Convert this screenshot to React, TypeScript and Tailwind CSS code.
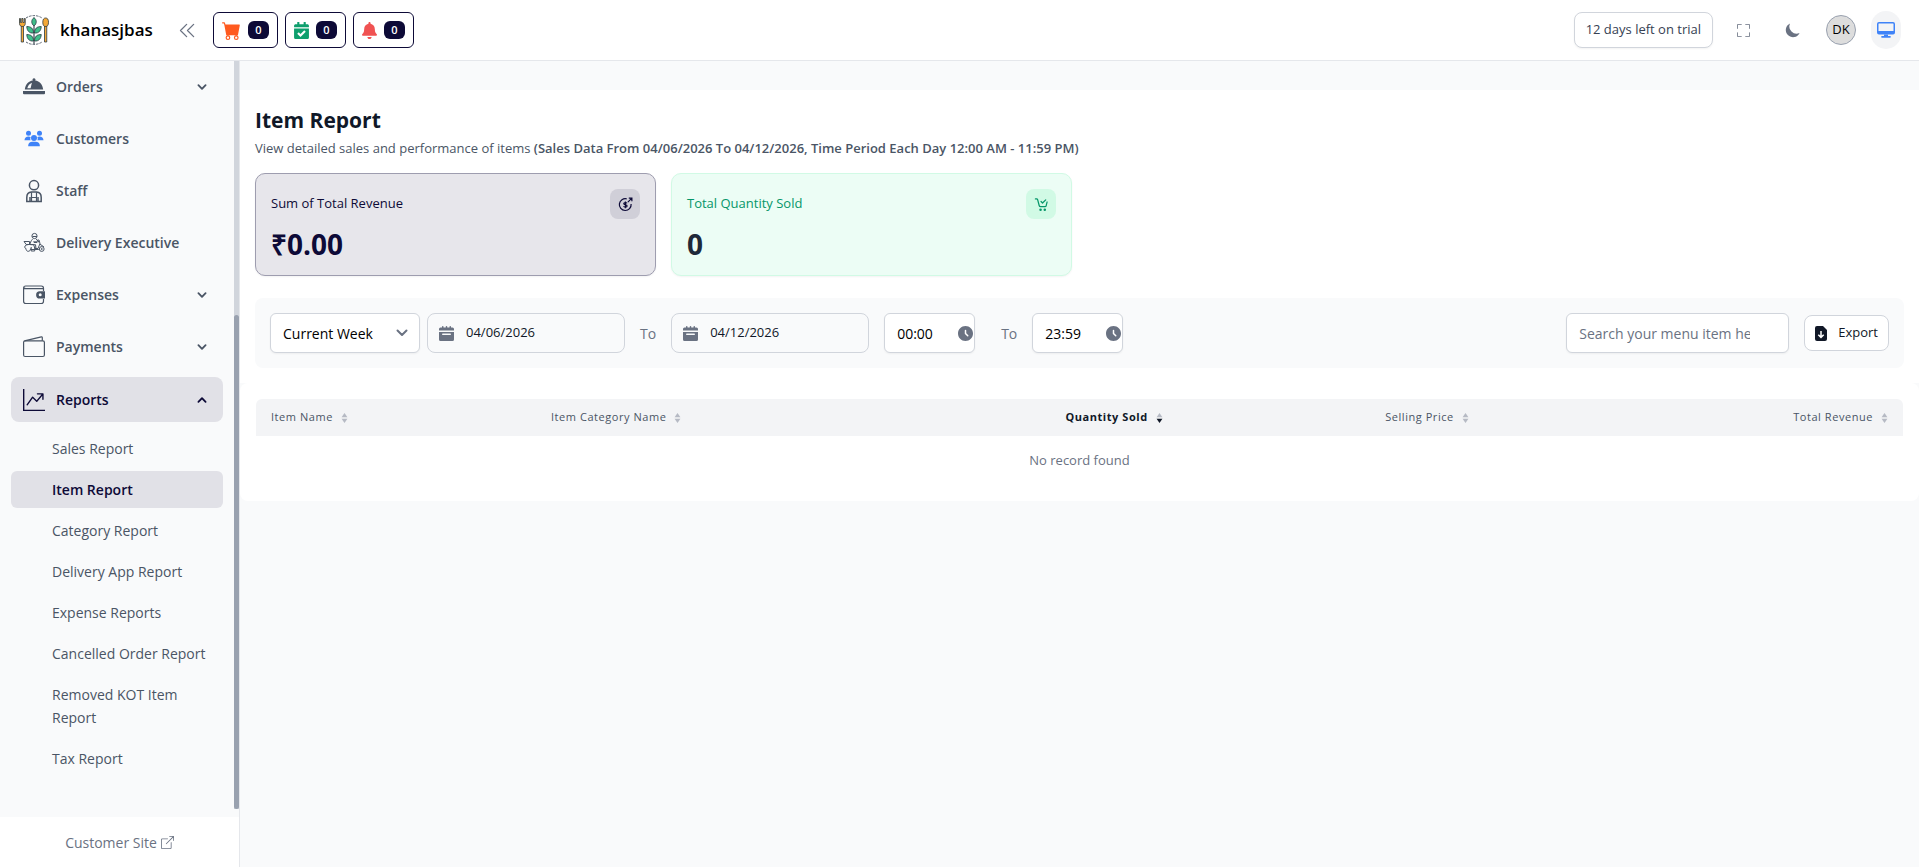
import { useState } from 'react';
import type { ReactNode } from 'react';
import { BsBoxArrowUpRight, BsCartFill, BsFullscreen, BsGraphUpArrow } from 'react-icons/bs';
import { FaBell, FaCalendarCheck } from 'react-icons/fa';
import { HiMoon, HiOutlineChevronDoubleLeft } from 'react-icons/hi';

function Logo() {
  return (
    <svg viewBox="0 0 60 60" className="size-[30px]" fill="none" aria-hidden="true">
      <path d="M14 6a29 29 0 0 1 32 0M14 54a29 29 0 0 0 32 0" stroke="#4b5563" strokeWidth="1.8" strokeDasharray="5 2" />
      <g stroke="#2b3a42" strokeWidth="1.6" strokeLinejoin="round">
        <path d="M4.500 22h4.500v32H4.500z" fill="#f4a836" />
        <path d="M1 7h2v8h2.500V7h2.500v8h2.500V7h2v10c0 4-2.500 6-5.700 6S1 21 1 17z" fill="#f4a836" />
        <path d="M51 22h4.500v32H51z" fill="#f4a836" />
        <ellipse cx="53.300" cy="14.500" rx="5.700" ry="8.500" fill="#f4a836" />
        <path d="M30 5c6 5 6 12 0 17-6-5-6-12 0-17z" fill="#3fbf8a" />
        <path d="M29 36c-8 1-13-4-13.500-13C24 23 29 27 29 36zM31 36c8 1 13-4 13.500-13C36 23 31 27 31 36z" fill="#3fbf8a" />
        <path d="M29 52c-8 1-13-4-13.500-13C24 39 29 43 29 52zM31 52c8 1 13-4 13.500-13C36 39 31 43 31 52z" fill="#3fbf8a" />
        <path d="M30 22v36" strokeWidth="2.2" />
      </g>
    </svg>
  );
}

function ClocheIcon() {
  return (
    <svg viewBox="0 0 22 22" className="size-[22px]" fill="currentColor" aria-hidden="true">
      <path d="M11 2.2a1.5 1.5 0 0 1 1.2 2.4c4.3.6 7.4 4 8 8.9H1.800C2.400 8.600 5.500 5.200 9.800 4.600A1.500 1.500 0 0 1 11 2.200zM4.300 12.200c.7-2.700 2.200-4.500 4.600-5.500l-1.300 5.500z" fillRule="evenodd" />
      <path d="M0 15h22v2.200a1 1 0 0 1-1 1H1a1 1 0 0 1-1-1z" />
    </svg>
  );
}

function CustomersIcon() {
  return (
    <svg viewBox="0 0 22 22" className="size-[22px]" fill="#3f83f8" aria-hidden="true">
      <circle cx="5.500" cy="5.300" r="2.500" />
      <circle cx="16.500" cy="5.300" r="2.500" />
      <path d="M1.500 12.300C1.500 10 3.200 8.600 5.400 8.600c1 0 1.700.2 2.300.6-.6 1-.6 2.100-.1 3.100zM20.500 12.300c0-2.300-1.700-3.700-3.900-3.700-1 0-1.700.2-2.300.6.6 1 .6 2.100.1 3.100z" />
      <circle cx="11" cy="10" r="3" />
      <path d="M5.200 18.200v-.6c0-2.400 1.800-3.900 4.100-3.900h3.400c2.300 0 4.100 1.500 4.100 3.900v.6z" />
    </svg>
  );
}

function StaffIcon() {
  return (
    <svg viewBox="0 0 22 24" className="h-[24px] w-[22px]" fill="none" stroke="currentColor" strokeWidth="1.500" aria-hidden="true">
      <circle cx="11" cy="6.200" r="4.600" />
      <path d="M3.800 22.400v-4c0-3 1.900-5 4.600-5.300h5.200c2.700.3 4.600 2.300 4.600 5.300v4zM7 22v-4M15 22v-4" />
      <path d="M8.500 13.200v9M13.500 13.200v9M8.500 18.500h5" strokeWidth="1.200" />
    </svg>
  );
}

function ScooterIcon() {
  return (
    <svg viewBox="0 0 22 22" className="size-[22px]" fill="none" stroke="currentColor" strokeWidth="1" strokeLinejoin="round" aria-hidden="true">
      <circle cx="11.500" cy="4" r="2.600" />
      <path d="M9.500 4.500h4.500M9.500 7.200c-1.700 1.800-2.600 4-2 5.500h5l.5 4M13 7.200l3 2.600h-4.500M11 9v1.500h3" />
      <path d="M1 9.500h5.500v3H3.200zM2 14c1-1.200 2.400-1.500 5-1.500h3.500l1.500 4h3l2-5-1-3.500h-1.500M3 16.500c-1 0-1.500-1-1-2.500M7.500 16.500c0 2-1 2.800-2.300 2.800S3 18.300 3 16.500M7.500 17.500h8.300" />
      <circle cx="18.700" cy="17" r="2.400" />
      <circle cx="18.700" cy="17" r=".6" />
      <path d="M8.200 15v4h3.500v-4M16.500 12l2.500 1.500 2 1.500" />
    </svg>
  );
}

function ExpensesIcon() {
  return (
    <svg viewBox="0 0 22 22" className="size-[22px]" fill="none" stroke="currentColor" aria-hidden="true">
      <path d="M20.500 7V4.200c0-1.500-1-2.200-2.200-2.200H2.700C1.500 2 .6 2.700.6 3.900v13.400c0 1.500.9 2.200 2.100 2.200h15.600c1.400 0 2.200-.8 2.200-2.200V15M.8 3.500c.3 1 1 1.200 2.200 1.200h17" strokeWidth="1.200" />
      <path d="M22 7.200h-5.200a3.600 3.600 0 0 0 0 7.400H22zM17.200 9.300a1.500 1.500 0 1 1 0 3 1.500 1.500 0 0 1 0-3z" fill="currentColor" fillRule="evenodd" stroke="none" />
    </svg>
  );
}

function PaymentsIcon() {
  return (
    <svg viewBox="0 0 22 22" className="size-[22px]" fill="none" stroke="currentColor" strokeWidth="1.200" strokeLinejoin="round" aria-hidden="true">
      <rect x=".6" y="4.800" width="20.800" height="15.700" rx="1.500" />
      <path d="M1.500 4.900 18.300.9c.6-.1 1 .2 1 .8v3" />
    </svg>
  );
}

function ChevronIcon({ up = false, className = 'size-[15px]' }: { up?: boolean; className?: string }) {
  return (
    <svg viewBox="0 0 20 20" className={className} fill="currentColor" aria-hidden="true">
      <path
        fillRule="evenodd"
        clipRule="evenodd"
        d={
          up
            ? 'M14.707 12.707a1 1 0 0 1-1.414 0L10 9.414l-3.293 3.293a1 1 0 0 1-1.414-1.414l4-4a1 1 0 0 1 1.414 0l4 4a1 1 0 0 1 0 1.414z'
            : 'M5.293 7.293a1 1 0 0 1 1.414 0L10 10.586l3.293-3.293a1 1 0 1 1 1.414 1.414l-4 4a1 1 0 0 1-1.414 0l-4-4a1 1 0 0 1 0-1.414z'
        }
      />
    </svg>
  );
}

function SelectArrow() {
  return (
    <svg
      viewBox="0 0 12 8"
      className="pointer-events-none col-start-1 row-start-1 mr-[12px] h-[8px] w-[12px] justify-self-end"
      fill="none"
      stroke="currentColor"
      strokeWidth="2"
      strokeLinecap="round"
      strokeLinejoin="round"
      aria-hidden="true"
    >
      <path d="m1.500 1.500 4.500 4.500 4.500-4.500" />
    </svg>
  );
}

function CalendarIcon() {
  return (
    <svg viewBox="0 0 20 20" className="size-[15px] shrink-0 text-gray-500" fill="currentColor" aria-hidden="true">
      <path d="M20 4a2 2 0 0 0-2-2h-2V1a1 1 0 0 0-2 0v1h-3V1a1 1 0 0 0-2 0v1H6V1a1 1 0 0 0-2 0v1H2a2 2 0 0 0-2 2v2h20V4ZM0 18a2 2 0 0 0 2 2h16a2 2 0 0 0 2-2V8H0v10Zm5-8h10a1 1 0 0 1 0 2H5a1 1 0 0 1 0-2Z" />
    </svg>
  );
}

function ClockIcon() {
  return (
    <svg viewBox="2 2 20 20" className="size-[15px] shrink-0 text-gray-500" fill="currentColor" aria-hidden="true">
      <path
        fillRule="evenodd"
        d="M2 12C2 6.477 6.477 2 12 2s10 4.477 10 10-4.477 10-10 10S2 17.523 2 12Zm11-4a1 1 0 1 0-2 0v4a1 1 0 0 0 .293.707l3 3a1 1 0 0 0 1.414-1.414L13 11.586V8Z"
      />
    </svg>
  );
}

function MonitorIcon() {
  return (
    <svg viewBox="0 0 18 16" className="h-[16px] w-[18px]" fill="currentColor" aria-hidden="true">
      <path
        fillRule="evenodd"
        d="M2 0h14a2 2 0 0 1 2 2v8.500a2 2 0 0 1-2 2H2a2 2 0 0 1-2-2V2a2 2 0 0 1 2-2zm0 1.500a.5.5 0 0 0-.5.5v7h15V2a.5.5 0 0 0-.5-.5z"
      />
      <path d="M7 12.500h4v1.500h2a.8.8 0 0 1 0 1.700H5A.8.8 0 0 1 5 14h2z" />
    </svg>
  );
}

function ExportIcon() {
  return (
    <svg viewBox="0 0 12 15" className="h-[15px] w-[12px]" aria-hidden="true">
      <path d="M2 0h6l4 4v9a2 2 0 0 1-2 2H2a2 2 0 0 1-2-2V2a2 2 0 0 1 2-2z" fill="#111827" />
      <path d="M6 5v6.200M3.300 8.700 6 11.400l2.700-2.700" fill="none" stroke="#fff" strokeWidth="1.500" />
    </svg>
  );
}

function RevenueIcon() {
  return (
    <svg viewBox="0 0 16 16" className="size-[15px]" fill="none" stroke="currentColor" strokeWidth="1.300" aria-hidden="true">
      <path d="M9.300 2A6.300 6.300 0 1 0 14 7.500" />
      <path d="m10.500 5.500 4-4M11.500 1.200h3.300v3.300" />
      <path d="M9.700 6.700c-.4-.6-1-.8-1.800-.8-2.300 0-2.300 2.300 0 2.400 2.400.1 2.400 2.500 0 2.500-.8 0-1.600-.3-2-.9M7.900 4.700v7.300" />
    </svg>
  );
}

function CartCheckIcon() {
  return (
    <svg viewBox="0 0 16 16" className="size-[15px]" fill="none" stroke="currentColor" strokeWidth="1.300" strokeLinecap="round" strokeLinejoin="round" aria-hidden="true">
      <path d="M1.500 2h1.300c.6 0 .9.300 1.100.9l1.700 6.400c.2.700.6 1 1.300 1h4.800c.7 0 1.100-.3 1.300-1l1-4M7.500 4.800l1.600 1.600L12.500 3" />
      <circle cx="7" cy="13.500" r=".7" />
      <circle cx="11.500" cy="13.500" r=".7" />
    </svg>
  );
}

function SortIcon({ active = false }: { active?: boolean }) {
  return (
    <svg viewBox="0 0 8 12" className="h-[10px] w-[7px]" aria-hidden="true">
      <path d="M4 0l3.500 5h-7z" fill="#b6bac4" />
      <path d="M4 12l3.500-5h-7z" fill={active ? '#111827' : '#b6bac4'} />
    </svg>
  );
}

const navItems: { label: string; icon: ReactNode; expandable: boolean }[] = [
  { label: 'Orders', icon: <ClocheIcon />, expandable: true },
  { label: 'Customers', icon: <CustomersIcon />, expandable: false },
  { label: 'Staff', icon: <StaffIcon />, expandable: false },
  { label: 'Delivery Executive', icon: <ScooterIcon />, expandable: false },
  { label: 'Expenses', icon: <ExpensesIcon />, expandable: true },
  { label: 'Payments', icon: <PaymentsIcon />, expandable: true },
];

const reports = [
  'Sales Report',
  'Item Report',
  'Category Report',
  'Delivery App Report',
  'Expense Reports',
  'Cancelled Order Report',
  'Removed KOT Item Report',
  'Tax Report',
];

const counters: { label: string; icon: ReactNode }[] = [
  { label: 'Orders', icon: <BsCartFill className="size-[19px] text-[#ff5a1f]" /> },
  { label: 'Reservations', icon: <FaCalendarCheck className="h-[17px] w-[15px] text-[#0e9f6e]" /> },
  { label: 'Waiter requests', icon: <FaBell className="h-[17px] w-[15px] text-[#f05252]" /> },
];

function Header() {
  return (
    <header className="flex h-[61px] shrink-0 items-center justify-between border-b border-gray-200 bg-white pr-[18px] pl-[19px]">
      <div className="flex items-center">
        <a href="#" className="flex items-center gap-[11px] text-[17px] font-semibold text-black">
          <Logo />
          khanasjbas
        </a>
        <button type="button" aria-label="Collapse sidebar" className="ml-6 text-gray-500">
          <HiOutlineChevronDoubleLeft className="size-[21px]" strokeWidth={1.5} />
        </button>
        <div className="ml-[15px] flex gap-[7px]">
          {counters.map((counter) => (
            <button
              key={counter.label}
              type="button"
              aria-label={counter.label}
              className="flex h-[36px] items-center gap-[7px] rounded-md border border-[#0d0a37] bg-white px-2"
            >
              {counter.icon}
              <span className="flex h-[18px] w-[21px] items-center justify-center rounded-md bg-[#0d0a37] text-[11px] font-semibold text-white">
                0
              </span>
            </button>
          ))}
        </div>
      </div>
      <div className="flex items-center">
        <a
          href="#"
          className="flex h-[36px] items-center rounded-lg border border-gray-300 bg-white px-[11px] text-[13px] font-medium text-gray-700 shadow-xs"
        >
          12 days left on trial
        </a>
        <button type="button" aria-label="Full screen" className="ml-6 text-gray-500">
          <BsFullscreen className="size-[13px]" />
        </button>
        <button type="button" aria-label="Dark mode" className="ml-[34px] text-gray-500">
          <HiMoon className="size-[18px]" />
        </button>
        <button
          type="button"
          className="ml-6 flex size-[30px] items-center justify-center rounded-full border border-gray-400 bg-[#dddddd] text-[13px] text-black"
        >
          DK
        </button>
        <button
          type="button"
          aria-label="Point of sale"
          className="ml-[15px] flex h-[38px] w-[30px] items-center justify-center rounded-full bg-gray-100 text-[#3f83f8]"
        >
          <MonitorIcon />
        </button>
      </div>
    </header>
  );
}

function Sidebar() {
  return (
    <aside className="flex w-[240px] shrink-0 flex-col border-r border-gray-200 bg-gray-50">
      <div className="flex min-h-0 flex-1">
        <nav aria-label="Main" className="flex-1 overflow-hidden pt-[3px] pr-[11px] pl-[11px] text-[14px]">
          <ul className="flex flex-col gap-[7px]">
            {navItems.map((item) => (
              <li key={item.label}>
                <a href="#" className="flex h-[45px] items-center gap-[11px] rounded-lg px-3 font-semibold text-gray-600">
                  {item.icon}
                  <span className="flex-1">{item.label}</span>
                  {item.expandable && <ChevronIcon className="size-[18px]" />}
                </a>
              </li>
            ))}
            <li className="pt-[1px]">
              <button
                type="button"
                aria-expanded="true"
                className="flex h-[45px] w-full items-center gap-[11px] rounded-lg bg-[#e1e1e7] px-3 text-left font-semibold text-[#0d0a37]"
              >
                <BsGraphUpArrow className="size-[22px]" />
                <span className="flex-1">Reports</span>
                <ChevronIcon up className="size-[18px]" />
              </button>
              <ul className="mt-2 flex flex-col gap-1">
                {reports.map((report) => (
                  <li key={report}>
                    <a
                      href="#"
                      className={
                        report === 'Item Report'
                          ? 'block rounded-md bg-[#e1e1e7] py-[7px] pr-3 pl-[41px] leading-[23px] font-semibold text-[#0d0a37]'
                          : 'block rounded-md py-[7px] pr-3 pl-[41px] leading-[23px] text-gray-600'
                      }
                    >
                      {report}
                    </a>
                  </li>
                ))}
              </ul>
            </li>
          </ul>
        </nav>
        <div className="mb-2 flex w-[5px] flex-col justify-end bg-gray-300">
          <div className="h-[66%] rounded-sm bg-gray-400" />
        </div>
      </div>
      <a href="#" className="flex h-[50px] items-center justify-center gap-1 bg-white text-[14px] text-gray-500">
        Customer Site
        <BsBoxArrowUpRight className="size-[13px]" />
      </a>
    </aside>
  );
}

function DateField({ label, value, onChange }: { label: string; value: string; onChange: (v: string) => void }) {
  return (
    <label className="flex h-[40px] w-[198px] items-center gap-3 rounded-lg border border-gray-300 bg-gray-50 px-[11px]">
      <CalendarIcon />
      <input
        aria-label={label}
        value={value}
        onChange={(e) => onChange(e.target.value)}
        className="w-full min-w-0 bg-transparent text-[13px] text-gray-900 outline-none"
      />
    </label>
  );
}

function TimeField({ label, value, onChange }: { label: string; value: string; onChange: (v: string) => void }) {
  return (
    <label className="flex h-[40px] w-[91px] items-center rounded-md border border-gray-300 bg-white pr-[1px] pl-3 shadow-xs">
      <input
        aria-label={label}
        value={value}
        onChange={(e) => onChange(e.target.value)}
        className="w-full min-w-0 bg-transparent text-[14px] text-black outline-none"
      />
      <ClockIcon />
    </label>
  );
}

function Filters() {
  const [startDate, setStartDate] = useState('04/06/2026');
  const [endDate, setEndDate] = useState('04/12/2026');
  const [startTime, setStartTime] = useState('00:00');
  const [endTime, setEndTime] = useState('23:59');
  const [search, setSearch] = useState('');

  return (
    <div className="mt-[22px] flex items-center justify-between rounded-lg bg-gray-50 p-[15px]">
      <form className="flex items-center text-[14px] text-gray-500">
        <div className="grid items-center">
          <select
            aria-label="Date range"
            className="col-start-1 row-start-1 h-[40px] w-[150px] appearance-none rounded-md border border-gray-300 bg-white pl-3 text-[14px] text-black shadow-xs"
          >
            <option>Current Week</option>
            <option>Last Week</option>
            <option>Current Month</option>
          </select>
          <SelectArrow />
        </div>
        <div className="ml-[7px] flex items-center gap-[15px]">
          <DateField label="Start date" value={startDate} onChange={setStartDate} />
          <span>To</span>
          <DateField label="End date" value={endDate} onChange={setEndDate} />
          <TimeField label="Start time" value={startTime} onChange={setStartTime} />
          <span className="pl-[11px]">To</span>
          <TimeField label="End time" value={endTime} onChange={setEndTime} />
        </div>
      </form>
      <div className="flex items-center gap-[15px]">
        <input
          aria-label="Search"
          value={search}
          onChange={(e) => setSearch(e.target.value)}
          placeholder="Search your menu item here"
          className="h-[40px] w-[223px] rounded-md border border-gray-300 bg-white pr-[38px] pl-3 text-[14px] text-black shadow-xs placeholder:text-gray-500"
        />
        <button
          type="button"
          className="flex h-[36px] items-center gap-[11px] rounded-lg border border-gray-300 bg-white px-[10px] text-[13px] font-medium text-gray-900"
        >
          <ExportIcon />
          Export
        </button>
      </div>
    </div>
  );
}

const columns = [
  { label: 'Item Name', width: 'w-[17%]', align: '' },
  { label: 'Item Category Name', width: 'w-[25.5%]', align: '' },
  { label: 'Quantity Sold', width: 'w-[19.2%]', align: 'justify-center' },
  { label: 'Selling Price', width: 'w-[18.8%]', align: 'justify-center' },
  { label: 'Total Revenue', width: 'w-[19.5%]', align: 'justify-end' },
];

function ReportTable() {
  return (
    <div className="rounded-lg bg-white px-4 pt-4 pb-4">
      <table className="w-full table-fixed">
        <thead>
          <tr>
            {columns.map((column) => {
              const active = column.label === 'Quantity Sold';
              return (
                <th
                  key={column.label}
                  className={`${column.width} h-[37px] bg-gray-100 px-[15px] text-[11px] tracking-wider first:rounded-tl-md last:rounded-tr-md`}
                >
                  <button
                    type="button"
                    className={`flex w-full items-center gap-2 ${column.align} ${active ? 'font-bold text-gray-900' : 'font-medium text-gray-600'}`}
                  >
                    {column.label}
                    <SortIcon active={active} />
                  </button>
                </th>
              );
            })}
          </tr>
        </thead>
        <tbody>
          <tr>
            <td colSpan={5} className="h-[49px] text-center text-[13px] text-gray-500">
              No record found
            </td>
          </tr>
        </tbody>
      </table>
    </div>
  );
}

export default function App() {
  return (
    <div className="flex h-screen flex-col bg-gray-50 font-['Open_Sans',sans-serif]">
      <Header />
      <div className="flex min-h-0 flex-1">
        <Sidebar />
        <main className="min-w-0 flex-1 pt-[29px]">
          <section className="bg-white px-[15px] pt-[15px] pb-[15px]">
            <h1 className="text-[21px] leading-[30px] font-bold text-gray-900">Item Report</h1>
            <p className="mt-[3px] text-[13px] leading-[20px] text-gray-600">
              View detailed sales and performance of items{' '}
              <strong className="font-semibold">
                (Sales Data From 04/06/2026 To 04/12/2026, Time Period Each Day 12:00 AM - 11:59 PM)
              </strong>
            </p>
            <div className="mt-[15px] grid grid-cols-4 gap-[15px]">
              <article className="rounded-[10px] border border-[#9e9daf] bg-[#e7e6eb] p-[15px] text-[#0d0a37] shadow-xs">
                <div className="flex items-center justify-between">
                  <h2 className="text-[13px] font-medium">Sum of Total Revenue</h2>
                  <span className="flex size-[30px] items-center justify-center rounded-lg bg-[#d0cfd8]">
                    <RevenueIcon />
                  </span>
                </div>
                <p className="mt-[9px] text-[28px] leading-[32px] font-bold">₹0.00</p>
              </article>
              <article className="rounded-[10px] border border-[#d1fae5] bg-[#ecfdf5] p-[15px] shadow-xs">
                <div className="flex items-center justify-between text-[#059669]">
                  <h2 className="text-[13px] font-medium">Total Quantity Sold</h2>
                  <span className="flex size-[30px] items-center justify-center rounded-lg bg-[#d1fae5]">
                    <CartCheckIcon />
                  </span>
                </div>
                <p className="mt-[9px] text-[28px] leading-[32px] font-bold text-gray-800">0</p>
              </article>
            </div>
            <Filters />
          </section>
          <ReportTable />
        </main>
      </div>
    </div>
  );
}
